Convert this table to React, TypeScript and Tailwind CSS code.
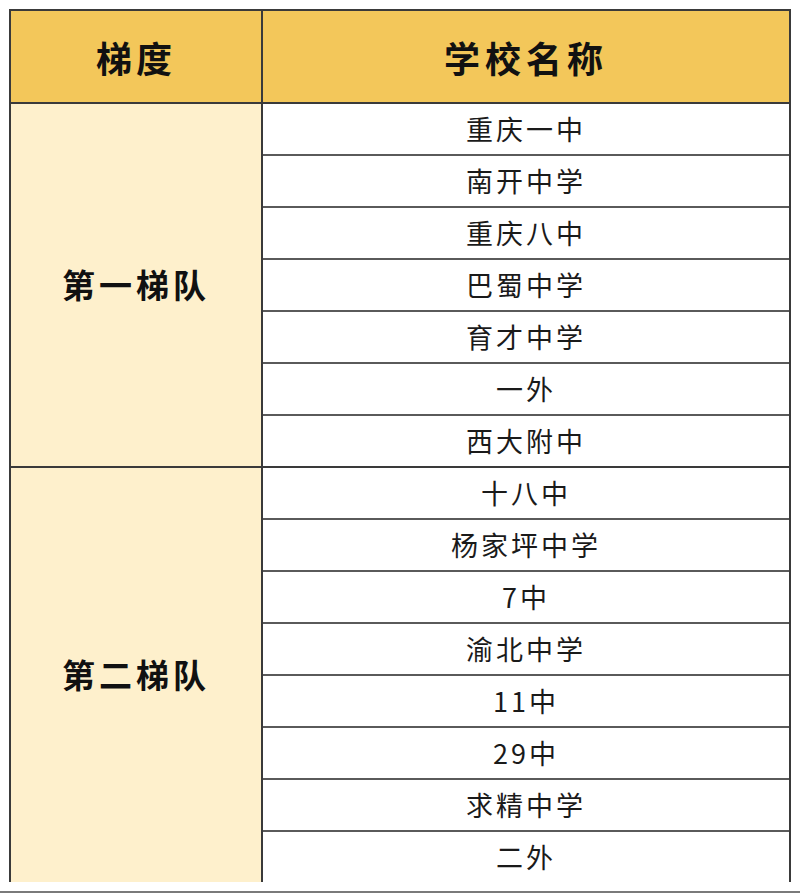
const groups = [
  {
    label: "第一梯队",
    schools: ["重庆一中", "南开中学", "重庆八中", "巴蜀中学", "育才中学", "一外", "西大附中"],
  },
  {
    label: "第二梯队",
    schools: ["十八中", "杨家坪中学", "7中", "渝北中学", "11中", "29中", "求精中学", "二外"],
  },
];

export default function App() {
  return (
    <div
      className="flex h-[893px] w-[800px] flex-col bg-white pl-[9px] pt-[9px]"
      style={{ fontFamily: '"Noto Sans CJK SC", "Noto Sans", sans-serif' }}
    >
      <div className="w-[782px] border-x-2 border-t-2 border-[#3a3a3a]">
        {/* header */}
        <div className="flex h-[93px] border-b-2 border-[#3a3a3a] bg-[#f3c75a] text-[36px] font-bold text-[#111]">
          <div className="flex w-[252px] items-center justify-center border-r-2 border-[#3a3a3a] tracking-[4px]">
            梯度
          </div>
          <div className="flex flex-1 items-center justify-center tracking-[5px]">学校名称</div>
        </div>

        {groups.map((group, gi) => (
          <div
            key={group.label}
            className={gi < groups.length - 1 ? "flex border-b-2 border-[#3a3a3a]" : "flex"}
          >
            <div className="flex w-[252px] items-center justify-center border-r-2 border-[#3a3a3a] bg-[#fef0cc] text-[33px] font-bold tracking-[4px] text-[#111]">
              {group.label}
            </div>
            <div className="flex flex-1 flex-col">
              {group.schools.map((name, i) => (
                <div
                  key={name}
                  className={
                    i < group.schools.length - 1
                      ? "flex h-[52px] items-center justify-center border-b-2 border-[#5a5a5a] text-[27px] tracking-[3px] text-[#1a1a1a]"
                      : "flex h-[50px] items-center justify-center text-[27px] tracking-[3px] text-[#1a1a1a]"
                  }
                >
                  {name}
                </div>
              ))}
            </div>
          </div>
        ))}
      </div>
      <div className="flex-1" />
      <div className="-ml-[9px] h-[2px] w-[800px] bg-[#7a7a7a]" />
    </div>
  );
}
